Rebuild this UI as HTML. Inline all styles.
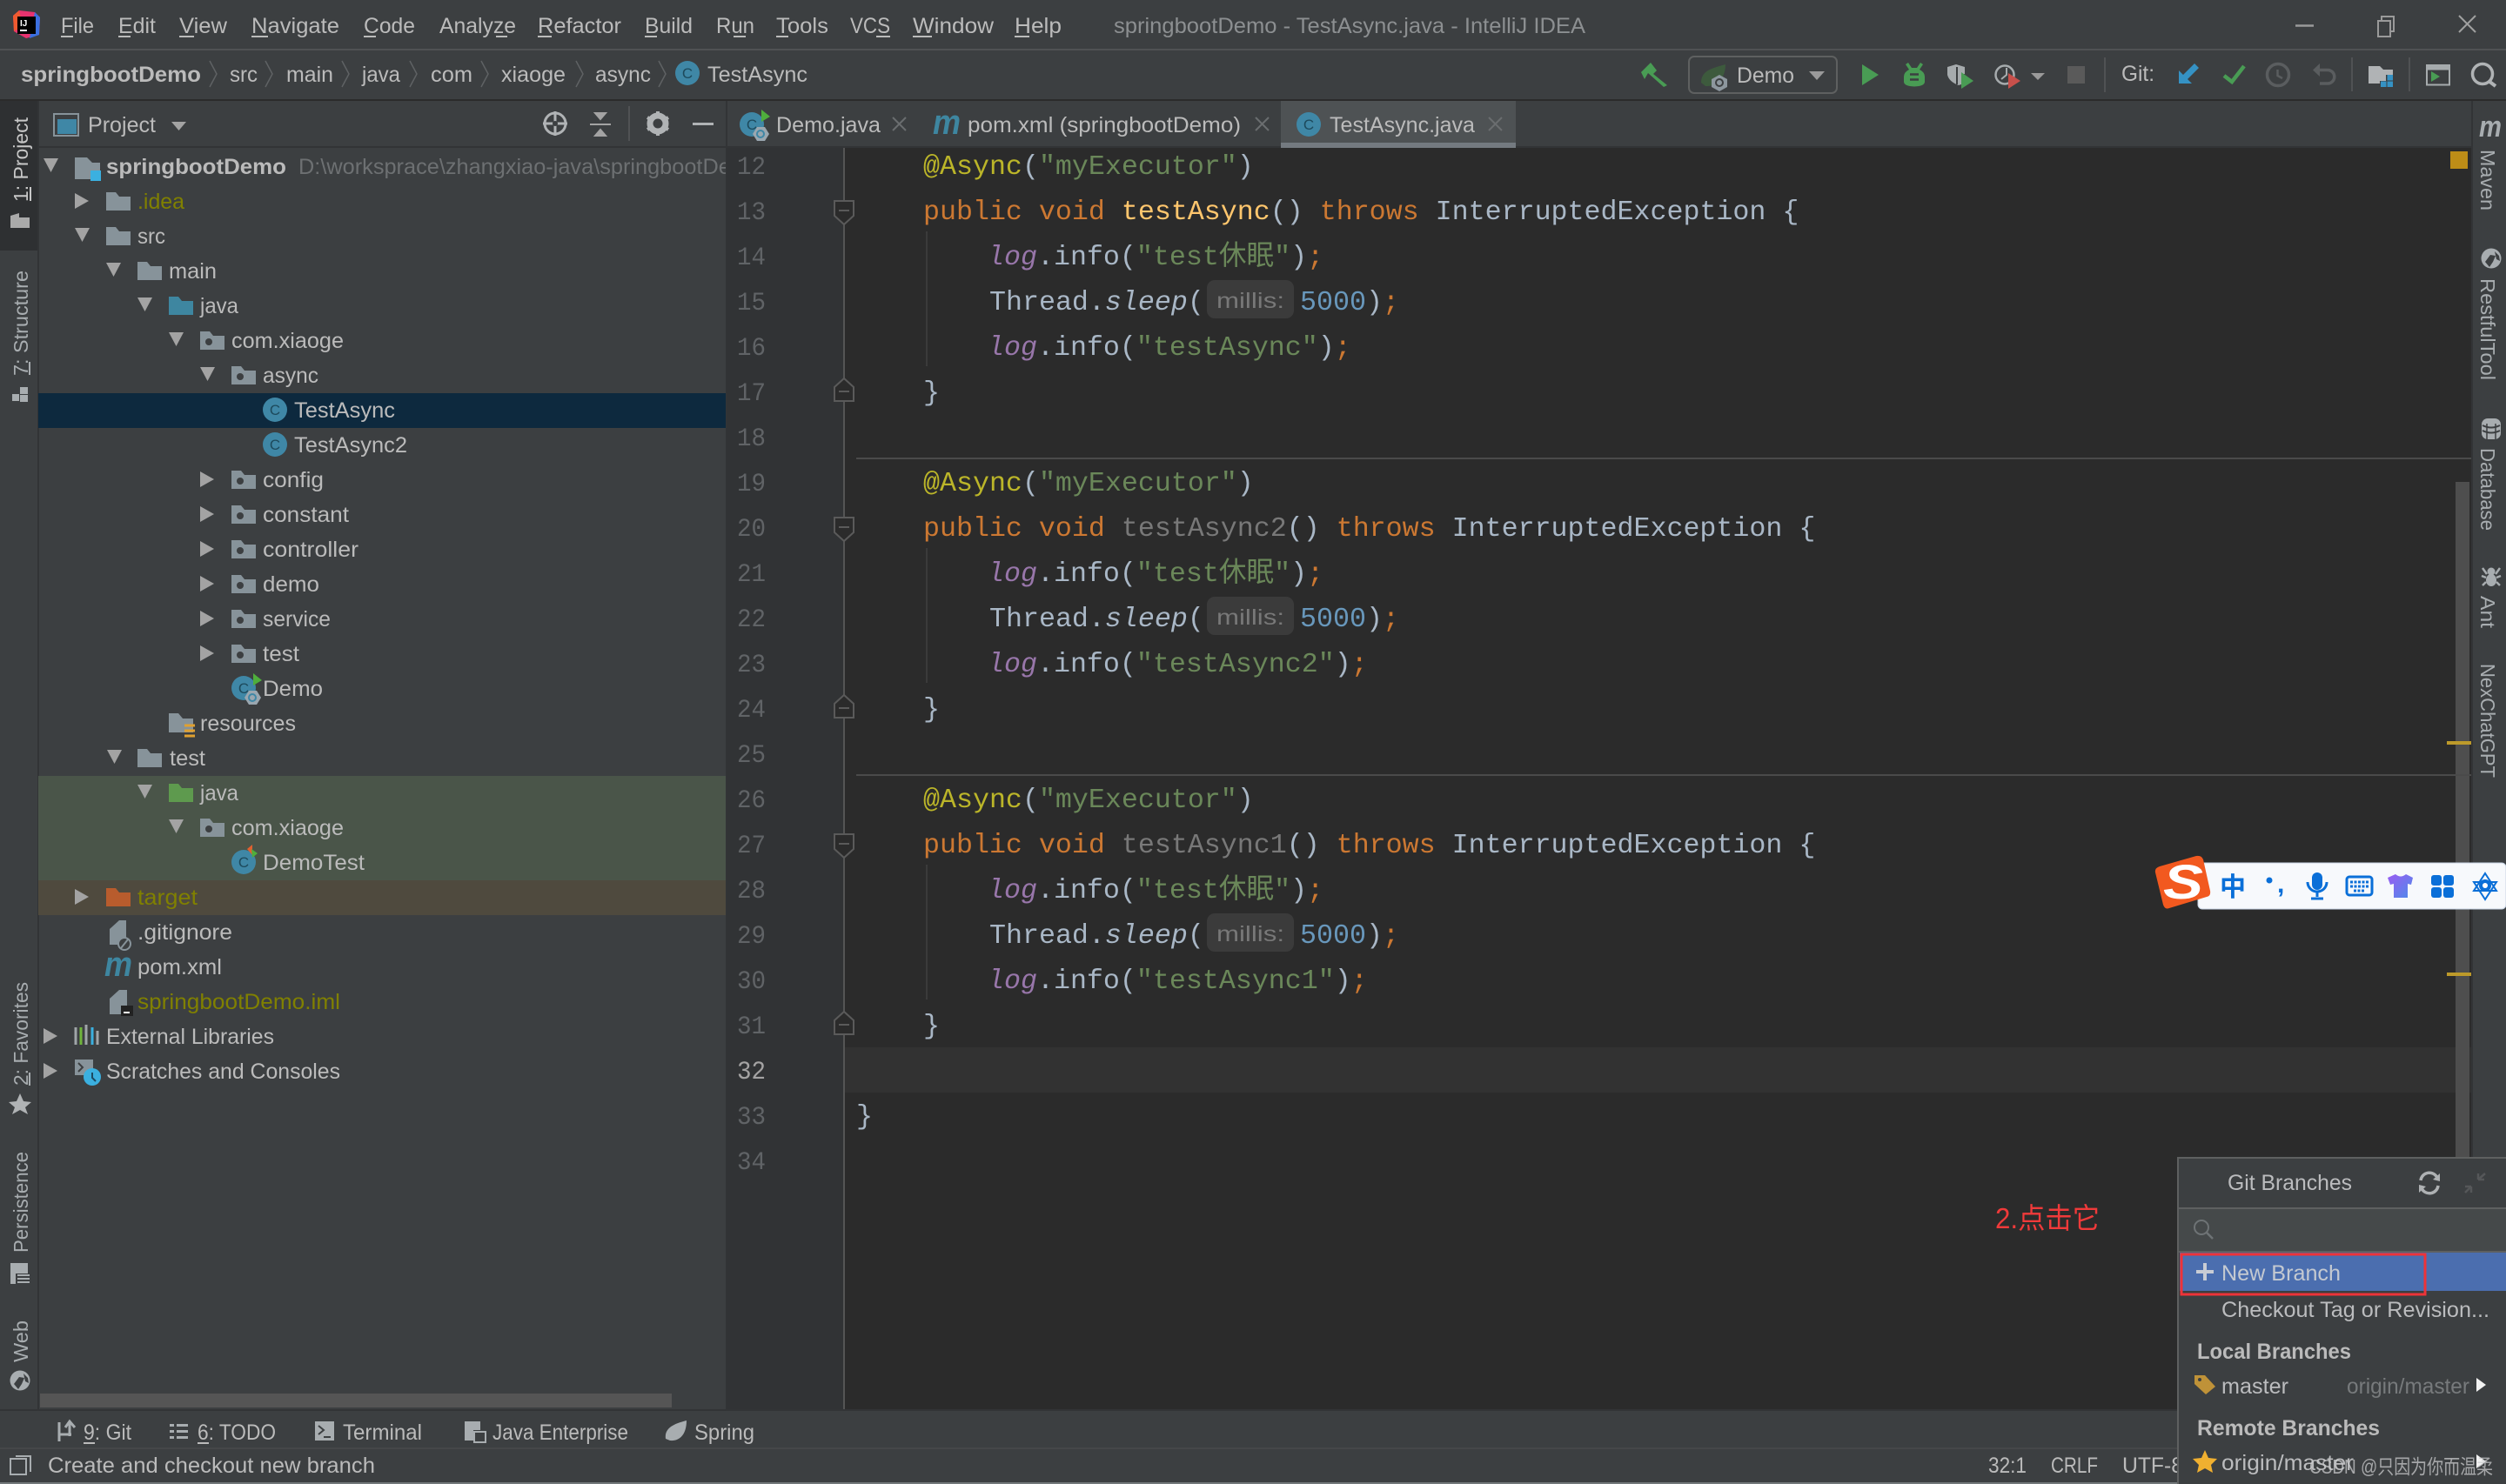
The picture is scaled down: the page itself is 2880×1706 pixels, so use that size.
<!DOCTYPE html>
<html><head><meta charset="utf-8"><title>springbootDemo - TestAsync.java - IntelliJ IDEA</title>
<style>
html,body{margin:0;padding:0;background:#3c3f41;width:2880px;height:1706px;overflow:hidden}
svg{display:block}
text{white-space:pre}
.u{font:25px "Liberation Sans","Noto Sans CJK SC",sans-serif;fill:#bbb}
.b{font:bold 25px "Liberation Sans","Noto Sans CJK SC",sans-serif;fill:#bbb}
.v{font:23px "Liberation Sans",sans-serif;fill:#a8adb0}
.y{fill:#808000}
.m{font:31.65px "Liberation Mono","Noto Sans CJK SC",monospace;fill:#a9b7c6}
.n{font:30px "Liberation Mono",monospace;fill:#606366}
.k{fill:#cc7832}.s{fill:#6a8759}.a{fill:#bbb529}.f{fill:#9876aa;font-style:italic}.i{font-style:italic}.d{fill:#787878}.h{fill:#ffc66d}.o{fill:#6897bb}
.c{font:17px "Liberation Sans",sans-serif;fill:#1d4a5c;text-anchor:middle}
.p{font:25px "Liberation Sans",sans-serif;fill:#bbbcbe}
.pb{font:bold 25px "Liberation Sans",sans-serif;fill:#bbb}
</style></head><body>
<svg xmlns="http://www.w3.org/2000/svg" width="2880" height="1706" viewBox="0 0 2880 1706">
<defs>
<path id="ad" d="M0-9H17L8.500 7Z" fill="#a3a3a3"/>
<path id="ar" d="M0-9L16 0L0 9Z" fill="#a3a3a3"/>
<path id="fo" d="M0-10H11L15-5H28V11H0Z"/>
<g id="pk"><path d="M0-10H11L15-5H28V11H0Z" fill="#87939a"/><circle cx="10" cy="2" r="4" fill="#3c3f41"/></g>
<path id="fo1" d="M959 233H981V250L970 260L959 250Z M964 244H976" fill="#2b2b2b" stroke="#5a5a5a" stroke-width="2"/>
<path id="fo2" d="M959 463H981V447L970 437L959 447Z M964 452H976" fill="#2b2b2b" stroke="#5a5a5a" stroke-width="2"/>
<g id="dm"><circle r="14" fill="#3f87a6"/><path d="M11-17L21-9L11-3Z" fill="#4fae3c"/><path d="M6 3L15 3L20 11L15 19L6 19L1 11Z" fill="#9aa7b0"/><circle cx="10" cy="11" r="4" fill="none" stroke="#3f87a6" stroke-width="2"/></g>
</defs>

<rect width="2880" height="1706" fill="#3c3f41"/>
<!-- menu -->
<rect y="56" width="2880" height="2" fill="#505254"/>
<rect y="114" width="2880" height="2" fill="#2b2b2b"/>
<path d="M22 12L40 14L46 20L45 40L30 44L16 36L15 18Z" fill="#e8326f"/><path d="M40 14L46 20L45 40L34 44Z" fill="#3b6fe0"/><path d="M15 18L22 12L26 30L16 36Z" fill="#ef5a30"/>
<rect x="20" y="19" width="21" height="20" fill="#000"/>
<text x="23" y="30" font-family="Liberation Sans" font-size="10" font-weight="bold" fill="#fff">IJ</text><rect x="23" y="34" width="8" height="2" fill="#fff"/>

<g class="mn">
<text class="u" x="70" y="38" textLength="38" lengthAdjust="spacingAndGlyphs">File</text>
<text class="u" x="136" y="38" textLength="43" lengthAdjust="spacingAndGlyphs">Edit</text>
<text class="u" x="206" y="38" textLength="55" lengthAdjust="spacingAndGlyphs">View</text>
<text class="u" x="289" y="38" textLength="101" lengthAdjust="spacingAndGlyphs">Navigate</text>
<text class="u" x="418" y="38" textLength="59" lengthAdjust="spacingAndGlyphs">Code</text>
<text class="u" x="505" y="38" textLength="88" lengthAdjust="spacingAndGlyphs">Analyze</text>
<text class="u" x="618" y="38" textLength="96" lengthAdjust="spacingAndGlyphs">Refactor</text>
<text class="u" x="741" y="38" textLength="55" lengthAdjust="spacingAndGlyphs">Build</text>
<text class="u" x="823" y="38" textLength="44" lengthAdjust="spacingAndGlyphs">Run</text>
<text class="u" x="892" y="38" textLength="60" lengthAdjust="spacingAndGlyphs">Tools</text>
<text class="u" x="977" y="38" textLength="46" lengthAdjust="spacingAndGlyphs">VCS</text>
<text class="u" x="1049" y="38" textLength="93" lengthAdjust="spacingAndGlyphs">Window</text>
<text class="u" x="1166" y="38" textLength="54" lengthAdjust="spacingAndGlyphs">Help</text>
<text class="u" x="1280" y="38" textLength="542" lengthAdjust="spacingAndGlyphs" style="fill:#8c8f91">springbootDemo - TestAsync.java - IntelliJ IDEA</text>
<path d="M70 42h14M136 42h14M206 42h17M289 42h19M418 42h14M570 42h13M618 42h16M741 42h14M843 42h14M892 42h14M1007 42h16M1049 42h22M1166 42h17" stroke="#bbb" stroke-width="2"/>
</g>
<!-- window controls -->
<path d="M2638 29.500h21" stroke="#9a9a9a" stroke-width="2.500"/>
<path d="M2733 24h14v18h-14zM2737 24v-5h14v17h-4" fill="none" stroke="#9a9a9a" stroke-width="2"/>
<path d="M2826 18L2845 37M2845 18L2826 37" stroke="#a0a0a0" stroke-width="2"/>

<!-- breadcrumb -->
<text class="b" x="24" y="94" textLength="207" lengthAdjust="spacingAndGlyphs">springbootDemo</text>
<text class="u" x="264" y="94" textLength="32" lengthAdjust="spacingAndGlyphs">src</text>
<text class="u" x="329" y="94" textLength="54" lengthAdjust="spacingAndGlyphs">main</text>
<text class="u" x="416" y="94" textLength="44" lengthAdjust="spacingAndGlyphs">java</text>
<text class="u" x="495" y="94" textLength="48" lengthAdjust="spacingAndGlyphs">com</text>
<text class="u" x="576" y="94" textLength="74" lengthAdjust="spacingAndGlyphs">xiaoge</text>
<text class="u" x="684" y="94" textLength="64" lengthAdjust="spacingAndGlyphs">async</text>
<text class="u" x="813" y="94" textLength="115" lengthAdjust="spacingAndGlyphs">TestAsync</text>
<g fill="none" stroke="#5f6264" stroke-width="1.500">
<path d="M241 70L249 85L241 100M305 70L313 85L305 100M393 70L401 85L393 100M471 70L479 85L471 100M553 70L561 85L553 100M662 70L670 85L662 100M757 70L765 85L757 100"/></g>
<circle cx="790" cy="84" r="14" fill="#3f87a6"/><text class="c" x="790" y="90">C</text>

<!-- toolbar -->
<path d="M1886 83L1897 72L1904 81L1900 85L1916 98L1912 100L1894 84L1890 91Z" fill="#499c54"/>
<rect x="1941" y="65" width="170" height="42" rx="6" fill="#3c3f41" stroke="#5e6060" stroke-width="2"/>
<path d="M1955 95C1955 80 1970 78 1983 74C1983 88 1975 100 1960 99Z" fill="#3d5a3d"/>
<path d="M1976 86L1985 91V100L1976 105L1967 100V91Z" fill="#8d979e"/><circle cx="1976" cy="95" r="4" fill="none" stroke="#3c3f41" stroke-width="2"/>
<text class="u" x="1996" y="95" textLength="66" lengthAdjust="spacingAndGlyphs">Demo</text>
<path d="M2079 82H2097L2088 92Z" fill="#9a9a9a"/>
<path d="M2140 74L2159 86L2140 98Z" fill="#499c54"/>
<!-- debug -->
<path d="M2193 72L2197 78H2203L2207 72L2210 74L2206 80Q2212 83 2212 88V94Q2212 99 2200 99.500Q2188 99 2188 94V88Q2188 83 2194 80L2190 74Z" fill="#499c54"/>
<path d="M2195 85.500H2205M2195 91.500H2205" stroke="#3c3f41" stroke-width="2.500"/>
<!-- coverage -->
<path d="M2238 77L2248 74L2258 77V85L2254 85V97L2251 98Q2240 94 2238 86Z" fill="#a6abad"/><path d="M2249 77V97" stroke="#3c3f41" stroke-width="2"/>
<path d="M2254 83L2268 93L2254 102Z" fill="#499c54"/>
<!-- profiler -->
<circle cx="2304" cy="86" r="10.500" fill="none" stroke="#a6abad" stroke-width="2.500"/><path d="M2306 78V86L2300 91" stroke="#a6abad" stroke-width="2" fill="none"/>
<path d="M2308 84L2322 93L2308 102Z" fill="#c8504b"/>
<path d="M2334 84H2350L2342 92Z" fill="#9a9a9a"/>
<rect x="2376" y="76" width="20" height="20" fill="#5a5a5a"/>
<path d="M2419 66V106M2703 66V105M2769 66V105" stroke="#505254" stroke-width="2"/>
<text class="u" x="2438" y="93" textLength="38" lengthAdjust="spacingAndGlyphs">Git:</text>
<path d="M2504 81V96H2519L2514 91L2527 78L2522 73L2509 86Z" fill="#3592c4"/>
<path d="M2556 87L2565 94L2579 76" fill="none" stroke="#499c54" stroke-width="4.500"/>
<circle cx="2618" cy="86" r="12.500" fill="none" stroke="#5a5d5f" stroke-width="3.500"/><path d="M2617.500 80V87L2623 90" stroke="#5a5d5f" stroke-width="2.500" fill="none"/>
<path d="M2662 80.500H2675A7.750 7.750 0 0 1 2675 96H2666" fill="none" stroke="#5a5d5f" stroke-width="3.500"/><path d="M2658 80.500L2666 73V88Z" fill="#5a5d5f"/>
<path d="M2722 76H2735L2739 80H2750V86H2742V93H2735V96H2722Z" fill="#b0b3b5"/>
<rect x="2743.500" y="86" width="6.500" height="6.500" fill="#3592c4"/><rect x="2736" y="93.500" width="6.500" height="6.500" fill="#3592c4"/><rect x="2743.500" y="93.500" width="6.500" height="6.500" fill="#3592c4"/>
<rect x="2789" y="75" width="26" height="22.500" fill="none" stroke="#a6abad" stroke-width="2"/><rect x="2789" y="75" width="26" height="5.500" fill="#a6abad"/><path d="M2794 82L2804 88L2794 94Z" fill="#499c54"/>
<circle cx="2853" cy="85" r="11.500" fill="none" stroke="#b0b3b5" stroke-width="3.500"/><path d="M2860 93L2868 99" stroke="#b0b3b5" stroke-width="4"/>

<!-- left stripe -->
<rect y="116" width="43" height="172" fill="#2e3032"/>
<rect x="43" y="116" width="2" height="1504" fill="#323436"/>
<text class="v" style="fill:#c8c8c8" transform="translate(32,232) rotate(-90)" textLength="97" lengthAdjust="spacingAndGlyphs">1: Project</text>
<path d="M12 248L22 245V250H34V262H12Z" fill="#aaa"/>
<rect x="34" y="215" width="2" height="16" fill="#c8c8c8"/>
<text class="v" transform="translate(32,432) rotate(-90)" textLength="121" lengthAdjust="spacingAndGlyphs">7: Structure</text>
<path d="M34 416V431" stroke="#a8adb0" stroke-width="2"/>
<path d="M14 453h8v8h-8zM23 445h9v8h-9zM23 454h9v8h-9z" fill="#a8adb0"/>
<text class="v" transform="translate(32,1248) rotate(-90)" textLength="119" lengthAdjust="spacingAndGlyphs">2: Favorites</text>
<path d="M34 1233V1248" stroke="#a8adb0" stroke-width="2"/>
<path d="M23 1257L27 1266L36 1267L29 1273L32 1281L23 1276L14 1281L17 1273L10 1267L19 1266Z" fill="#b0b3b5"/>
<text class="v" transform="translate(32,1440) rotate(-90)" textLength="116" lengthAdjust="spacingAndGlyphs">Persistence</text>
<path d="M12 1452H32V1464H18V1476H12Z" fill="#a8adb0"/><path d="M20 1466h14M20 1470h14M20 1474h14" stroke="#a8adb0" stroke-width="2"/>
<text class="v" transform="translate(32,1566) rotate(-90)" textLength="48" lengthAdjust="spacingAndGlyphs">Web</text>
<circle cx="23" cy="1587" r="11.500" fill="#a8adb0"/><path d="M16 1591L22 1583L28 1584L25 1591L21 1597ZM27 1579L32 1584L33 1590L29 1588Z" fill="#3c3f41"/>

<!-- project header -->
<rect x="62" y="131" width="28" height="25" fill="none" stroke="#87939a" stroke-width="2"/><rect x="66" y="137" width="22" height="17" fill="#3f87a6"/>
<text class="u" x="101" y="152" textLength="78" lengthAdjust="spacingAndGlyphs">Project</text>
<path d="M197 140H214L205.500 150Z" fill="#a3a3a3"/>
<circle cx="638" cy="142" r="12" fill="none" stroke="#b0b3b5" stroke-width="3"/><path d="M638 128V156M624 142H652" stroke="#b0b3b5" stroke-width="3"/><circle cx="638" cy="142" r="3" fill="#3c3f41"/>
<path d="M684 130H696L690 137ZM684 156H696L690 149ZM678 143H702" fill="#a3a3a3" stroke="#a3a3a3" stroke-width="2"/>
<rect x="722" y="122" width="2" height="40" fill="#505254"/>
<circle cx="756" cy="142" r="9" fill="none" stroke="#b0b3b5" stroke-width="7"/><path d="M756 128V134M756 150V156M744 135L749 138M763 146L768 149M744 149L749 146M763 138L768 135" stroke="#b0b3b5" stroke-width="4"/>
<rect x="796" y="141" width="24" height="3" fill="#b0b3b5"/>
<rect x="45" y="168" width="2795" height="2" fill="#323436"/>

<!-- panel rows -->
<rect x="44" y="452" width="790" height="40" fill="#0d293e"/>
<rect x="44" y="892" width="790" height="120" fill="#4a5549"/>
<rect x="44" y="1012" width="790" height="40" fill="#4f4a3e"/>

<use href="#ad" x="50" y="191"/>
<path d="M86 181H100L106 187H115V206H86Z" fill="#87939a"/><rect x="104" y="196" width="12" height="12" fill="#3bb0e0"/>
<text class="b" x="122" y="200" textLength="207" lengthAdjust="spacingAndGlyphs">springbootDemo</text>
<clipPath id="tc"><rect x="340" y="170" width="494" height="50"/></clipPath>
<g clip-path="url(#tc)"><text class="u" x="343" y="200" textLength="532" lengthAdjust="spacingAndGlyphs" style="fill:#6d7072">D:\worksprace\zhangxiao-java\springbootDemo</text></g>

<use href="#ar" x="86" y="231"/><use href="#fo" x="122" y="231" fill="#87939a"/>
<text class="u y" x="158" y="240" textLength="54" lengthAdjust="spacingAndGlyphs" style="fill:#808000">.idea</text>
<use href="#ad" x="86" y="271"/><use href="#fo" x="122" y="271" fill="#87939a"/>
<text class="u" x="158" y="280" textLength="32" lengthAdjust="spacingAndGlyphs">src</text>
<use href="#ad" x="122" y="311"/><use href="#fo" x="158" y="311" fill="#87939a"/>
<text class="u" x="194" y="320" textLength="55" lengthAdjust="spacingAndGlyphs">main</text>
<use href="#ad" x="158" y="351"/><use href="#fo" x="194" y="351" fill="#3e86a0"/>
<text class="u" x="230" y="360" textLength="44" lengthAdjust="spacingAndGlyphs">java</text>
<use href="#ad" x="194" y="391"/><use href="#pk" x="230" y="391"/>
<text class="u" x="266" y="400" textLength="129" lengthAdjust="spacingAndGlyphs">com.xiaoge</text>
<use href="#ad" x="230" y="431"/><use href="#pk" x="266" y="431"/>
<text class="u" x="302" y="440" textLength="64" lengthAdjust="spacingAndGlyphs">async</text>
<circle cx="316" cy="471" r="14" fill="#3f87a6"/><text class="c" x="316" y="477">C</text>
<text class="u" x="338" y="480" textLength="116" lengthAdjust="spacingAndGlyphs">TestAsync</text>
<circle cx="316" cy="511" r="14" fill="#3f87a6"/><text class="c" x="316" y="517">C</text>
<text class="u" x="338" y="520" textLength="130" lengthAdjust="spacingAndGlyphs">TestAsync2</text>

<use href="#ar" x="230" y="551"/><use href="#pk" x="266" y="551"/><text class="u" x="302" y="560" textLength="70" lengthAdjust="spacingAndGlyphs">config</text>
<use href="#ar" x="230" y="591"/><use href="#pk" x="266" y="591"/><text class="u" x="302" y="600" textLength="99" lengthAdjust="spacingAndGlyphs">constant</text>
<use href="#ar" x="230" y="631"/><use href="#pk" x="266" y="631"/><text class="u" x="302" y="640" textLength="110" lengthAdjust="spacingAndGlyphs">controller</text>
<use href="#ar" x="230" y="671"/><use href="#pk" x="266" y="671"/><text class="u" x="302" y="680" textLength="65" lengthAdjust="spacingAndGlyphs">demo</text>
<use href="#ar" x="230" y="711"/><use href="#pk" x="266" y="711"/><text class="u" x="302" y="720" textLength="78" lengthAdjust="spacingAndGlyphs">service</text>
<use href="#ar" x="230" y="751"/><use href="#pk" x="266" y="751"/><text class="u" x="302" y="760" textLength="42" lengthAdjust="spacingAndGlyphs">test</text>
<use href="#dm" x="280" y="791"/><text class="c" x="280" y="797">C</text>
<text class="u" x="302" y="800" textLength="69" lengthAdjust="spacingAndGlyphs">Demo</text>
<path d="M194 820H205L210 826H222V842H194Z" fill="#87939a"/><path d="M212 834h12M212 840h12M212 846h12" stroke="#e0a030" stroke-width="3"/>
<text class="u" x="230" y="840" textLength="110" lengthAdjust="spacingAndGlyphs">resources</text>
<use href="#ad" x="123" y="871"/><use href="#fo" x="158" y="871" fill="#87939a"/>
<text class="u" x="195" y="880" textLength="41" lengthAdjust="spacingAndGlyphs">test</text>
<use href="#ad" x="158" y="911"/><use href="#fo" x="194" y="911" fill="#5e9a4e"/>
<text class="u" x="230" y="920" textLength="44" lengthAdjust="spacingAndGlyphs">java</text>
<use href="#ad" x="194" y="951"/><use href="#pk" x="230" y="951"/>
<text class="u" x="266" y="960" textLength="129" lengthAdjust="spacingAndGlyphs">com.xiaoge</text>
<circle cx="280" cy="991" r="14" fill="#3f87a6"/><path d="M284 976L290 971V983Z" fill="#e06030"/><path d="M289 976L296 981L290 986Z" fill="#4fae3c"/><text class="c" x="280" y="997">C</text>
<text class="u" x="302" y="1000" textLength="117" lengthAdjust="spacingAndGlyphs">DemoTest</text>
<use href="#ar" x="86" y="1031"/><use href="#fo" x="122" y="1031" fill="#b85c2d"/>
<text class="u" x="158" y="1040" textLength="69" lengthAdjust="spacingAndGlyphs" style="fill:#808000">target</text>
<path d="M126 1068L137 1058H145V1086H126Z" fill="#87939a"/><circle cx="143" cy="1085" r="7" fill="#3c3f41" stroke="#87939a" stroke-width="2"/><path d="M139 1090L147 1080" stroke="#87939a" stroke-width="2"/>
<text class="u" x="158" y="1080" textLength="109" lengthAdjust="spacingAndGlyphs">.gitignore</text>
<text x="120" y="1122" font-family="Liberation Sans" font-size="40" font-weight="bold" font-style="italic" fill="#3e86a0" textLength="32" lengthAdjust="spacingAndGlyphs">m</text>
<text class="u" x="158" y="1120" textLength="97" lengthAdjust="spacingAndGlyphs">pom.xml</text>
<path d="M126 1148L137 1138H146V1166H126Z" fill="#87939a"/><rect x="139" y="1156" width="14" height="12" fill="#222"/><rect x="142" y="1163" width="7" height="2" fill="#fff"/>
<text class="u" x="158" y="1160" textLength="233" lengthAdjust="spacingAndGlyphs" style="fill:#808000">springbootDemo.iml</text>
<use href="#ar" x="50" y="1191"/>
<path d="M87 1181v20M93 1181v20M99 1178v23M106 1181v20M112 1185v16" stroke="#a0a5a8" stroke-width="3"/><path d="M93 1181v20" stroke="#6fb53c" stroke-width="3"/><path d="M106 1181v20" stroke="#3bb0e0" stroke-width="3"/>
<text class="u" x="122" y="1200" textLength="193" lengthAdjust="spacingAndGlyphs">External Libraries</text>
<use href="#ar" x="50" y="1231"/>
<rect x="86" y="1218" width="21" height="18" fill="#87939a"/><path d="M90 1222L95 1227L90 1232" stroke="#3c3f41" stroke-width="2" fill="none"/><circle cx="106" cy="1238" r="10" fill="#3bb0e0"/><path d="M106 1233V1239L110 1243" stroke="#1c4a62" stroke-width="2" fill="none"/>
<text class="u" x="122" y="1240" textLength="269" lengthAdjust="spacingAndGlyphs">Scratches and Consoles</text>
<rect x="46" y="1602" width="726" height="16" fill="#555"/>

<!-- gutter & editor -->
<rect x="834" y="116" width="2" height="1504" fill="#323436"/>
<rect x="836" y="170" width="134" height="1450" fill="#313335"/>
<rect x="970" y="170" width="1870" height="1450" fill="#2b2b2b"/>
<rect x="970" y="1204" width="1870" height="52" fill="#323232"/>
<rect x="2822" y="554" width="16" height="1066" fill="#4e4e4e"/>
<rect x="969" y="170" width="2" height="1450" fill="#555"/>
<rect x="984" y="526" width="1856" height="2" fill="#4a4a4a"/>
<rect x="984" y="890" width="1856" height="2" fill="#4a4a4a"/>
<path d="M1065 266V421M1065 630V785M1065 994V1149" stroke="#3b3b3b" stroke-width="2"/>
<g transform="translate(0,-2)"><use href="#fo1"/><use href="#fo2"/><use href="#fo1" y="364"/><use href="#fo2" y="364"/><use href="#fo1" y="728"/><use href="#fo2" y="728"/></g>
<rect x="2816" y="174" width="20" height="20" fill="#bd8d17"/>
<rect x="2812" y="852" width="28" height="4" fill="#bd9a2a"/>
<rect x="2812" y="1118" width="28" height="4" fill="#bd9a2a"/>

<!-- tabs -->
<rect x="1472" y="116" width="270" height="54" fill="#4e5254"/>
<rect x="1472" y="164" width="270" height="6" fill="#747a80"/>
<use href="#dm" x="864" y="143"/><text class="c" x="864" y="149">C</text>
<text class="u" x="892" y="152" textLength="120" lengthAdjust="spacingAndGlyphs">Demo.java</text>
<path d="M1026 135L1041 150M1041 135L1026 150M1443 135L1458 150M1458 135L1443 150M1711 135L1726 150M1726 135L1711 150" stroke="#6a6d6f" stroke-width="2"/>
<text x="1072" y="154" font-family="Liberation Sans" font-size="40" font-weight="bold" font-style="italic" fill="#3e86a0" textLength="32" lengthAdjust="spacingAndGlyphs">m</text>
<text class="u" x="1112" y="152" textLength="314" lengthAdjust="spacingAndGlyphs">pom.xml (springbootDemo)</text>
<circle cx="1504" cy="143" r="14" fill="#3f87a6"/><text class="c" x="1504" y="149">C</text>
<text class="u" x="1528" y="152" textLength="167" lengthAdjust="spacingAndGlyphs">TestAsync.java</text>

<g transform="translate(0,-2)">
<!-- line numbers -->
<text class="n" x="847" y="202" textLength="33" lengthAdjust="spacingAndGlyphs">12</text>
<text class="n" x="847" y="254" textLength="33" lengthAdjust="spacingAndGlyphs">13</text>
<text class="n" x="847" y="306" textLength="33" lengthAdjust="spacingAndGlyphs">14</text>
<text class="n" x="847" y="358" textLength="33" lengthAdjust="spacingAndGlyphs">15</text>
<text class="n" x="847" y="410" textLength="33" lengthAdjust="spacingAndGlyphs">16</text>
<text class="n" x="847" y="462" textLength="33" lengthAdjust="spacingAndGlyphs">17</text>
<text class="n" x="847" y="514" textLength="33" lengthAdjust="spacingAndGlyphs">18</text>
<text class="n" x="847" y="566" textLength="33" lengthAdjust="spacingAndGlyphs">19</text>
<text class="n" x="847" y="618" textLength="33" lengthAdjust="spacingAndGlyphs">20</text>
<text class="n" x="847" y="670" textLength="33" lengthAdjust="spacingAndGlyphs">21</text>
<text class="n" x="847" y="722" textLength="33" lengthAdjust="spacingAndGlyphs">22</text>
<text class="n" x="847" y="774" textLength="33" lengthAdjust="spacingAndGlyphs">23</text>
<text class="n" x="847" y="826" textLength="33" lengthAdjust="spacingAndGlyphs">24</text>
<text class="n" x="847" y="878" textLength="33" lengthAdjust="spacingAndGlyphs">25</text>
<text class="n" x="847" y="930" textLength="33" lengthAdjust="spacingAndGlyphs">26</text>
<text class="n" x="847" y="982" textLength="33" lengthAdjust="spacingAndGlyphs">27</text>
<text class="n" x="847" y="1034" textLength="33" lengthAdjust="spacingAndGlyphs">28</text>
<text class="n" x="847" y="1086" textLength="33" lengthAdjust="spacingAndGlyphs">29</text>
<text class="n" x="847" y="1138" textLength="33" lengthAdjust="spacingAndGlyphs">30</text>
<text class="n" x="847" y="1190" textLength="33" lengthAdjust="spacingAndGlyphs">31</text>
<text class="n" x="847" y="1242" textLength="33" lengthAdjust="spacingAndGlyphs" style="fill:#a4a3a3">32</text>
<text class="n" x="847" y="1294" textLength="33" lengthAdjust="spacingAndGlyphs">33</text>
<text class="n" x="847" y="1346" textLength="33" lengthAdjust="spacingAndGlyphs">34</text>

<!-- code block 1 -->
<text class="m" x="1061" y="202"><tspan class="a">@Async</tspan>(<tspan class="s">"myExecutor"</tspan>)</text>
<text class="m" x="1061" y="254"><tspan class="k">public void </tspan><tspan class="h">testAsync</tspan>() <tspan class="k">throws </tspan>InterruptedException {</text>
<text class="m" x="1135" y="306"><tspan class="f">log</tspan>.info(<tspan class="s">"test休眠"</tspan>)<tspan class="k">;</tspan></text>
<text class="m" x="1137" y="358">Thread.<tspan class="i">sleep</tspan>(</text>
<rect x="1387" y="324" width="100" height="44" rx="9" fill="#3b3b3b"/>
<text class="u" x="1398" y="356" textLength="78" lengthAdjust="spacingAndGlyphs" style="fill:#787878">millis:</text>
<text class="m" x="1494" y="358"><tspan class="o">5000</tspan>)<tspan class="k">;</tspan></text>
<text class="m" x="1135" y="410"><tspan class="f">log</tspan>.info(<tspan class="s">"testAsync"</tspan>)<tspan class="k">;</tspan></text>
<text class="m" x="1061" y="462">}</text>
<!-- block 2 -->
<text class="m" x="1061" y="566"><tspan class="a">@Async</tspan>(<tspan class="s">"myExecutor"</tspan>)</text>
<text class="m" x="1061" y="618"><tspan class="k">public void </tspan><tspan class="d">testAsync2</tspan>() <tspan class="k">throws </tspan>InterruptedException {</text>
<text class="m" x="1135" y="670"><tspan class="f">log</tspan>.info(<tspan class="s">"test休眠"</tspan>)<tspan class="k">;</tspan></text>
<text class="m" x="1137" y="722">Thread.<tspan class="i">sleep</tspan>(</text>
<rect x="1387" y="688" width="100" height="44" rx="9" fill="#3b3b3b"/>
<text class="u" x="1398" y="720" textLength="78" lengthAdjust="spacingAndGlyphs" style="fill:#787878">millis:</text>
<text class="m" x="1494" y="722"><tspan class="o">5000</tspan>)<tspan class="k">;</tspan></text>
<text class="m" x="1135" y="774"><tspan class="f">log</tspan>.info(<tspan class="s">"testAsync2"</tspan>)<tspan class="k">;</tspan></text>
<text class="m" x="1061" y="826">}</text>
<!-- block 3 -->
<text class="m" x="1061" y="930"><tspan class="a">@Async</tspan>(<tspan class="s">"myExecutor"</tspan>)</text>
<text class="m" x="1061" y="982"><tspan class="k">public void </tspan><tspan class="d">testAsync1</tspan>() <tspan class="k">throws </tspan>InterruptedException {</text>
<text class="m" x="1135" y="1034"><tspan class="f">log</tspan>.info(<tspan class="s">"test休眠"</tspan>)<tspan class="k">;</tspan></text>
<text class="m" x="1137" y="1086">Thread.<tspan class="i">sleep</tspan>(</text>
<rect x="1387" y="1052" width="100" height="44" rx="9" fill="#3b3b3b"/>
<text class="u" x="1398" y="1084" textLength="78" lengthAdjust="spacingAndGlyphs" style="fill:#787878">millis:</text>
<text class="m" x="1494" y="1086"><tspan class="o">5000</tspan>)<tspan class="k">;</tspan></text>
<text class="m" x="1135" y="1138"><tspan class="f">log</tspan>.info(<tspan class="s">"testAsync1"</tspan>)<tspan class="k">;</tspan></text>
<text class="m" x="1061" y="1190">}</text>
<text class="m" x="984" y="1294">}</text>
</g>

<!-- right stripe -->
<rect x="2840" y="116" width="2" height="1504" fill="#323436"/>
<rect x="2842" y="116" width="38" height="1504" fill="#3c3f41"/>
<text x="2849" y="157" font-family="Liberation Sans" font-size="34" font-weight="bold" font-style="italic" fill="#a8adb0" textLength="26" lengthAdjust="spacingAndGlyphs">m</text>
<text class="v" transform="translate(2851,172) rotate(90)" textLength="70" lengthAdjust="spacingAndGlyphs">Maven</text>
<circle cx="2863" cy="297" r="11.500" fill="#a8adb0"/><path d="M2856 301L2862 293L2868 294L2865 301L2861 307ZM2867 289L2872 294L2873 300L2869 298Z" fill="#3c3f41"/>
<text class="v" transform="translate(2851,320) rotate(90)" textLength="117" lengthAdjust="spacingAndGlyphs">RestfulTool</text>
<!-- database -->
<rect x="2852" y="481" width="22" height="24" rx="7" fill="#a8adb0"/><path d="M2853 489Q2863 494 2873 489M2853 495Q2863 500 2873 495" fill="none" stroke="#3c3f41" stroke-width="2"/><path d="M2858 487V505M2868 487V505" stroke="#3c3f41" stroke-width="1.500"/>
<text class="v" transform="translate(2851,515) rotate(90)" textLength="95" lengthAdjust="spacingAndGlyphs">Database</text>
<!-- ant -->
<ellipse cx="2863" cy="667" rx="6" ry="7" fill="#a8adb0"/><circle cx="2863" cy="657" r="4.500" fill="#a8adb0"/>
<path d="M2858 660L2853 653M2868 660L2873 653M2857 664L2852 662M2869 664L2874 662M2857 669L2853 673M2869 669L2873 673" stroke="#a8adb0" stroke-width="2.500" fill="none"/>
<text class="v" transform="translate(2851,685) rotate(90)" textLength="37" lengthAdjust="spacingAndGlyphs">Ant</text>
<text class="v" transform="translate(2851,763) rotate(90)" textLength="131" lengthAdjust="spacingAndGlyphs">NexChatGPT</text>

<!-- bottom bar -->
<rect y="1620" width="2880" height="2" fill="#323436"/>
<rect y="1622" width="2880" height="42" fill="#3c3f41"/>
<rect y="1664" width="2880" height="2" fill="#454749"/>
<rect y="1704" width="2880" height="2" fill="#72787a"/>
<path d="M68 1635V1657M68 1649H82M80 1651V1636M75 1641L80 1634L86 1641" stroke="#a8adb0" stroke-width="3" fill="none"/>
<text class="u" x="96" y="1655" textLength="55" lengthAdjust="spacingAndGlyphs">9: Git</text><path d="M96 1659h13" stroke="#bbb" stroke-width="2"/>
<path d="M195 1637h5v3h-5zM203 1637h13v3h-13zM195 1644h5v3h-5zM203 1644h13v3h-13zM195 1651h5v3h-5zM203 1651h13v3h-13z" fill="#a8adb0"/>
<text class="u" x="227" y="1655" textLength="90" lengthAdjust="spacingAndGlyphs">6: TODO</text><path d="M227 1659h13" stroke="#bbb" stroke-width="2"/>
<rect x="362" y="1634" width="22" height="22" fill="#a8adb0"/><path d="M366 1639L372 1644L366 1649M372 1652H380" stroke="#3c3f41" stroke-width="2" fill="none"/>
<text class="u" x="394" y="1655" textLength="91" lengthAdjust="spacingAndGlyphs">Terminal</text>
<path d="M534 1634H552V1644H544V1656H534Z" fill="#a8adb0"/><rect x="545" y="1646" width="13" height="12" fill="none" stroke="#a8adb0" stroke-width="2"/>
<text class="u" x="566" y="1655" textLength="156" lengthAdjust="spacingAndGlyphs">Java Enterprise</text>
<path d="M765 1654C763 1640 778 1636 789 1633C789 1648 782 1657 770 1656Z" fill="#a8adb0"/>
<text class="u" x="798" y="1655" textLength="69" lengthAdjust="spacingAndGlyphs">Spring</text>
<rect x="12" y="1677" width="18" height="18" fill="none" stroke="#a8adb0" stroke-width="2"/><path d="M18 1674H35V1692" fill="none" stroke="#a8adb0" stroke-width="2"/>
<text class="u" x="55" y="1693" textLength="376" lengthAdjust="spacingAndGlyphs">Create and checkout new branch</text>
<text class="u" x="2285" y="1693" textLength="44" lengthAdjust="spacingAndGlyphs">32:1</text>
<text class="u" x="2357" y="1693" textLength="54" lengthAdjust="spacingAndGlyphs">CRLF</text>
<text class="u" x="2439" y="1693" textLength="70" lengthAdjust="spacingAndGlyphs">UTF-8</text>

<!-- sogou -->
<rect x="2526" y="992" width="354" height="53" rx="5" fill="#f7f9fc" stroke="#c8d4e4" stroke-width="1"/>
<path d="M2482 996L2524 984Q2530 983 2532 988L2540 1024Q2541 1030 2536 1031L2493 1044Q2488 1046 2486 1040L2477 1003Q2476 998 2482 996Z" fill="#f2591f"/>
<text x="2486" y="1033" font-family="Liberation Sans" font-size="56" font-weight="bold" font-style="italic" fill="#fff" textLength="46" lengthAdjust="spacingAndGlyphs">S</text>
<text x="2551" y="1030" font-family="Noto Sans CJK SC,sans-serif" font-size="30" font-weight="bold" fill="#0a6fd8">中</text>
<circle cx="2608" cy="1012" r="3.500" fill="#0a6fd8"/><text x="2617" y="1026" font-family="Liberation Sans" font-size="30" font-weight="bold" fill="#0a6fd8">,</text>
<rect x="2657" y="1003" width="12" height="20" rx="6" fill="#0a6fd8"/><path d="M2652 1014A11 11 0 0 0 2674 1014M2663 1025V1031M2656 1033H2670" fill="none" stroke="#0a6fd8" stroke-width="3"/>
<rect x="2697" y="1008" width="29" height="21" rx="3" fill="none" stroke="#0a6fd8" stroke-width="3"/><path d="M2701 1014h21M2701 1019h21M2705 1024h13" stroke="#0a6fd8" stroke-width="3" stroke-dasharray="3 1.500"/>
<defs><linearGradient id="sh" x1="0" y1="0" x2="1" y2="1"><stop offset="0" stop-color="#9a5cf2"/><stop offset="1" stop-color="#4d8bea"/></linearGradient></defs>
<path d="M2744 1009L2753 1005Q2759 1010 2765 1005L2773 1009L2771 1017L2767 1016V1032H2751V1016L2747 1017Z" fill="url(#sh)"/>
<rect x="2794" y="1006" width="12" height="12" rx="3" fill="#0a6fd8"/><rect x="2808" y="1006" width="12" height="12" rx="3" fill="#0a6fd8"/><rect x="2794" y="1020" width="12" height="12" rx="3" fill="#0a6fd8"/><rect x="2808" y="1020" width="12" height="12" rx="3" fill="#0a6fd8"/>
<path d="M2856 1004L2869 1024H2843ZM2856 1034L2843 1014H2869Z" fill="none" stroke="#0a6fd8" stroke-width="2"/><circle cx="2856" cy="1018" r="7" fill="#0a6fd8"/><circle cx="2856" cy="1018" r="3" fill="#fff"/>

<!-- red label -->
<text x="2293" y="1412" font-family="Liberation Sans,Noto Sans CJK SC,sans-serif" font-size="33" fill="#f03a3a" textLength="120" lengthAdjust="spacingAndGlyphs">2.点击它</text>

<!-- popup -->
<rect x="2503" y="1331" width="378" height="376" fill="#3c3f41" stroke="#5e6060" stroke-width="2"/>
<rect x="2504" y="1388" width="376" height="2" fill="#5e6060"/>
<rect x="2504" y="1390" width="376" height="48" fill="#45494a"/>
<rect x="2504" y="1438" width="376" height="2" fill="#5e6060"/>
<text class="p" x="2560" y="1368" textLength="143" lengthAdjust="spacingAndGlyphs">Git Branches</text>
<path d="M2782 1357A10 10 0 0 1 2801 1354M2802 1363A10 10 0 0 1 2783 1366" fill="none" stroke="#aeb1b3" stroke-width="3.500"/><path d="M2796 1356L2804 1349V1358ZM2788 1364L2780 1371V1362Z" fill="#aeb1b3"/>
<path d="M2848 1356L2856 1349M2848 1356H2855M2848 1356V1349M2840 1364L2833 1371M2840 1364H2833M2840 1364V1371" stroke="#555759" stroke-width="2.500" fill="none"/>
<circle cx="2530" cy="1411" r="8" fill="none" stroke="#6e7375" stroke-width="2"/><path d="M2536 1417L2543 1424" stroke="#6e7375" stroke-width="2.500"/>
<rect x="2505" y="1440" width="375" height="44" fill="#4b6eaf"/>
<path d="M2534 1452V1472M2524 1462H2544" stroke="#c8ccd4" stroke-width="4"/>
<text class="p" x="2553" y="1472" textLength="137" lengthAdjust="spacingAndGlyphs" style="fill:#c4c9d1">New Branch</text>
<rect x="2507" y="1442" width="280" height="46" fill="none" stroke="#ee3338" stroke-width="3"/>
<text class="p" x="2553" y="1514" textLength="308" lengthAdjust="spacingAndGlyphs">Checkout Tag or Revision...</text>
<text class="pb" x="2525" y="1562" textLength="177" lengthAdjust="spacingAndGlyphs">Local Branches</text>
<path d="M2522 1581H2534L2546 1594L2535 1603L2522 1591Z" fill="#bf9238"/><circle cx="2528" cy="1586" r="2" fill="#3c3f41"/>
<text class="p" x="2553" y="1602" textLength="77" lengthAdjust="spacingAndGlyphs">master</text>
<text class="p" x="2697" y="1602" textLength="141" lengthAdjust="spacingAndGlyphs" style="fill:#777a7c">origin/master</text>
<path d="M2846 1584L2857 1592L2846 1600Z" fill="#f2f2f2"/>
<text class="pb" x="2525" y="1650" textLength="210" lengthAdjust="spacingAndGlyphs">Remote Branches</text>
<path d="M2534 1667L2538 1676L2548 1677L2541 1684L2543 1693L2534 1688L2525 1693L2527 1684L2520 1677L2530 1676Z" fill="#f0b030"/>
<text class="p" x="2553" y="1690" textLength="152" lengthAdjust="spacingAndGlyphs">origin/master</text>
<path d="M2846 1672L2857 1680L2846 1688Z" fill="#f2f2f2"/>
<text x="2654" y="1694" font-family="Liberation Sans,Noto Sans CJK SC,sans-serif" font-size="23" fill="#c9cbcc" fill-opacity="0.75" textLength="211" lengthAdjust="spacingAndGlyphs">CSDN @只因为你而温柔</text>
</svg>
</body></html>
